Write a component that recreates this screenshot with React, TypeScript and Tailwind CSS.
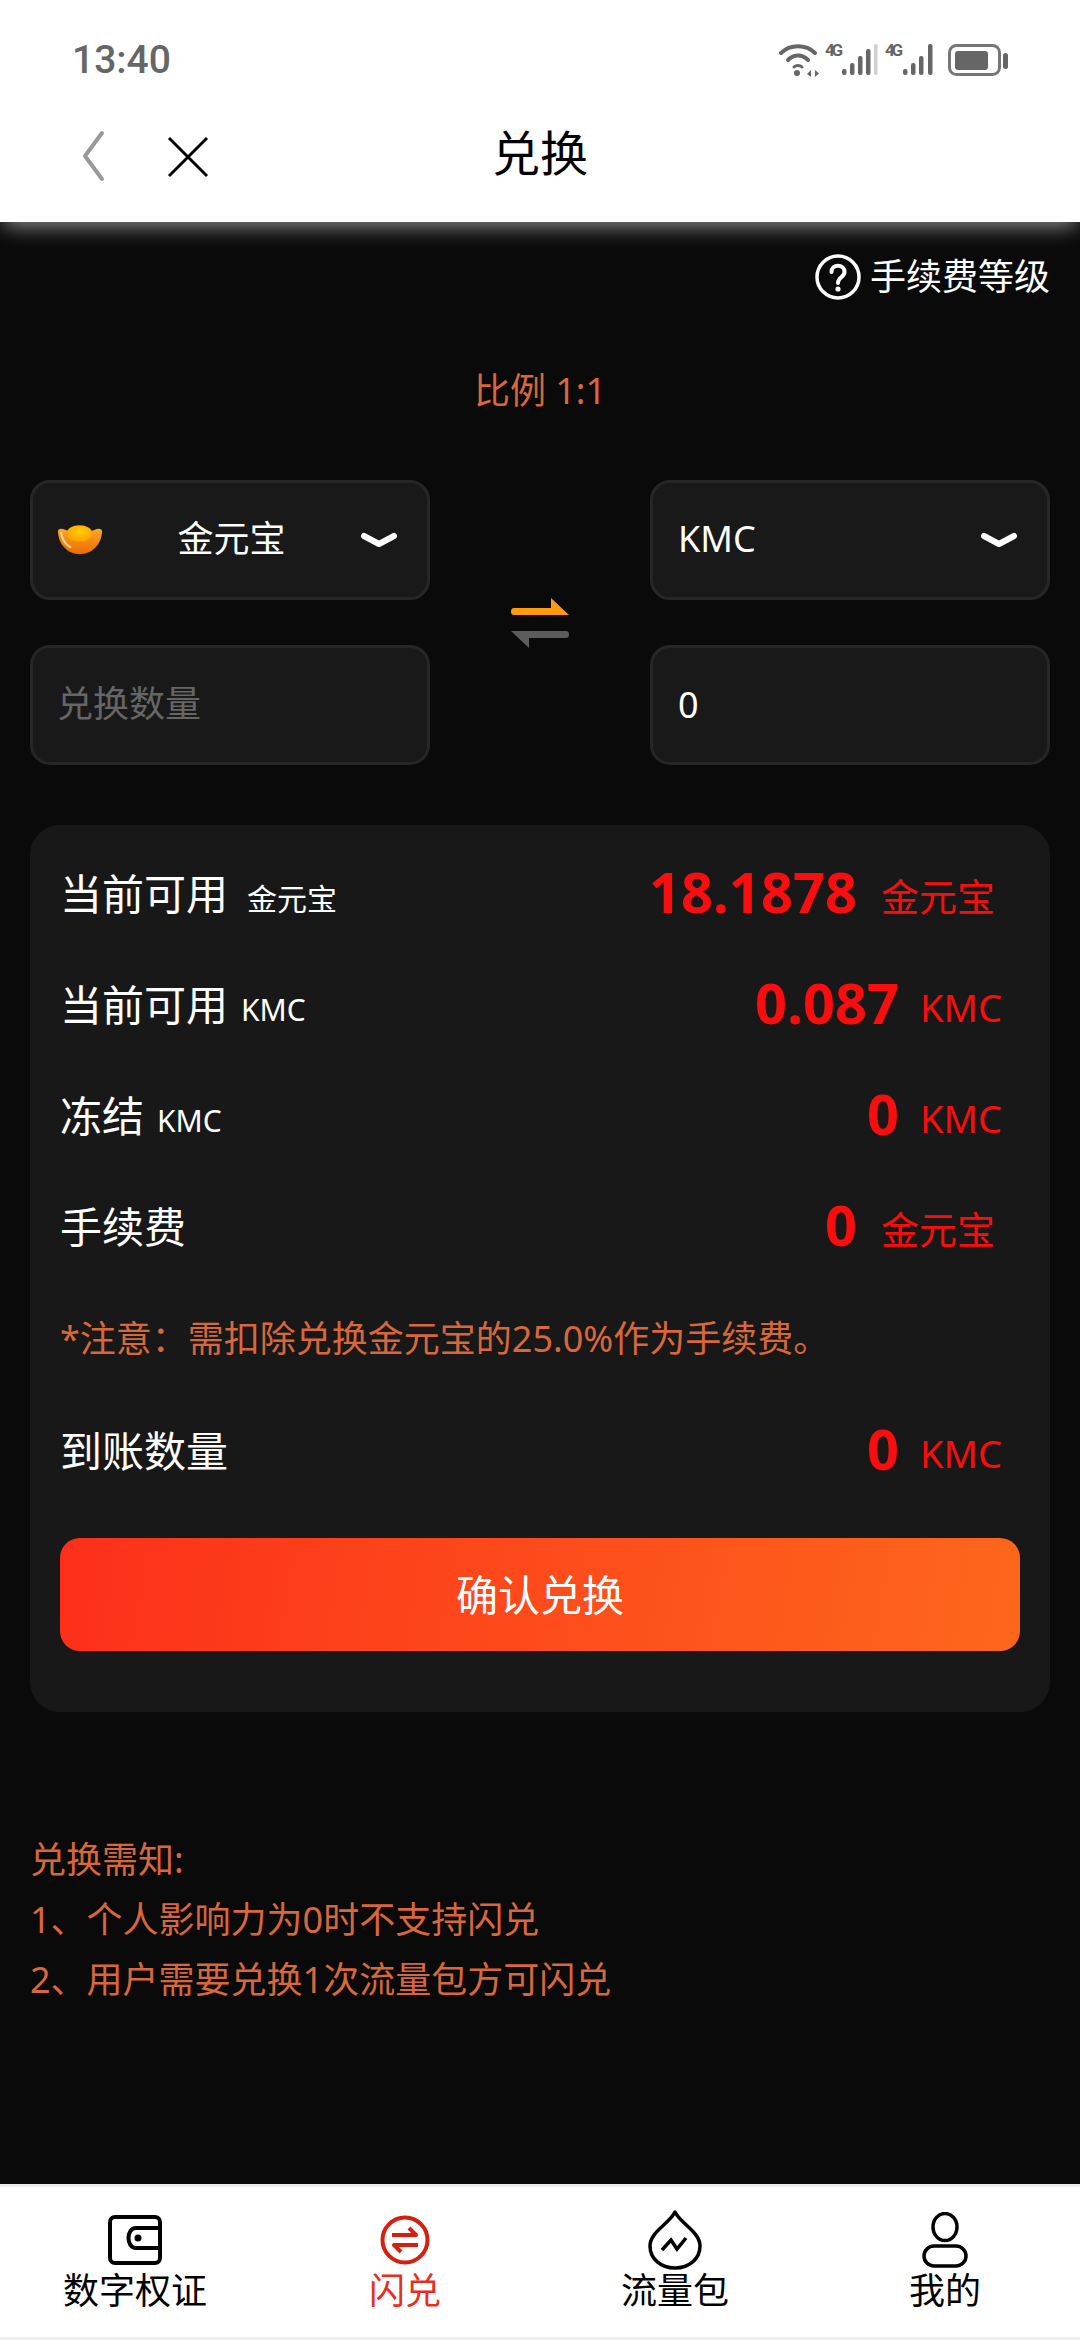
import React from "react";

function StatusIcons() {
  return (
    <svg width="230" height="40" viewBox="0 -4 230 40" fill="none" className="mb-[4px]">
      <g stroke="#666" strokeWidth="4" strokeLinecap="round">
        <path d="M3 11 C12 2 28 2 37 11" />
        <path d="M10 18 C16 12 24 12 30 18" />
        <path d="M16 25 C18 23 22 23 24 25" strokeWidth="3" />
      </g>
      <circle cx="19" cy="31" r="3" fill="#666" />
      <path d="M29 32 L33 28 V35 Z M35 28 V35 M37 28 L41 31.5 L37 35 Z" fill="#666" />
      <text x="47" y="14" fontSize="17" fontWeight="700" fontFamily="Roboto" fill="#666" textLength="18">4G</text>
      <g fill="#666">
        <rect x="64" y="27" width="4.5" height="6" rx="2" />
        <rect x="72" y="21" width="4.5" height="12" rx="2" />
        <rect x="80" y="14" width="4.5" height="19" rx="2" />
        <rect x="88" y="7" width="4.5" height="26" rx="2" />
      </g>
      <rect x="96" y="2" width="3.5" height="31" rx="1.5" fill="#d0d0d0" />
      <text x="107" y="14" fontSize="17" fontWeight="700" fontFamily="Roboto" fill="#666" textLength="18">4G</text>
      <g fill="#666">
        <rect x="125" y="27" width="4.5" height="6" rx="2" />
        <rect x="133" y="21" width="4.5" height="12" rx="2" />
        <rect x="141" y="14" width="4.5" height="19" rx="2" />
        <rect x="150" y="2" width="4.5" height="31" rx="2" />
      </g>
      <rect x="171.5" y="3.5" width="50" height="29" rx="7" stroke="#777" strokeWidth="3" />
      <rect x="177" y="9" width="33" height="19" rx="3" fill="#666" />
      <rect x="225" y="11" width="5" height="16" rx="2.5" fill="#666" />
    </svg>
  );
}

function Ingot() {
  return (
    <svg width="46" height="32" viewBox="0 0 45 30">
      <defs>
        <linearGradient id="ing" x1="0" y1="0" x2="0" y2="1">
          <stop offset="0" stopColor="#ffa726" />
          <stop offset="1" stopColor="#e96a00" />
        </linearGradient>
        <radialGradient id="top" cx="0.5" cy="0.4" r="0.6">
          <stop offset="0" stopColor="#ffd000" />
          <stop offset="1" stopColor="#ff9f00" />
        </radialGradient>
      </defs>
      <path d="M1 8 C0 4 4 3 8 5 C14 8 31 8 37 5 C41 3 45 4 44 8 C43 20 34 29 22 29 C11 29 2 20 1 8 Z" fill="url(#ing)" />
      <ellipse cx="22" cy="8.5" rx="12.5" ry="8" fill="url(#top)" />
      <path d="M4 8 C5 14 8 19 13 22" stroke="#ffd9a0" strokeWidth="2" fill="none" strokeLinecap="round" />
    </svg>
  );
}

function Chevron() {
  return (
    <svg width="38" height="18" viewBox="0 0 38 18" fill="none" className="mr-[5px]">
      <path d="M4 5 L19 13 L34 5" stroke="#fff" strokeWidth="6" strokeLinecap="round" strokeLinejoin="round" />
    </svg>
  );
}

function Box({ children, className = "text-white" }: { children: React.ReactNode; className?: string }) {
  return (
    <div className={"h-[120px] rounded-[20px] border-[3px] border-[#262626] bg-[#191919] flex items-center px-[24px] text-[36px] " + className}>
      {children}
    </div>
  );
}

function Row({
  label,
  sub,
  subClass = "",
  value,
  unit,
  cjk = false,
}: {
  label: string;
  sub?: string;
  subClass?: string;
  value: string;
  unit: string;
  cjk?: boolean;
}) {
  return (
    <div className="h-[111px] flex items-center justify-between">
      <div className="flex items-baseline text-white text-[42px]">
        <span>{label}</span>
        {sub ? <span className={"text-[30px] " + subClass}>{sub}</span> : null}
      </div>
      <div className={"flex items-baseline text-[#f80e0e] pb-[6px] " + (cjk ? "mr-[25px]" : "mr-[18px]")}>
        <span className="text-[56px] font-bold">{value}</span>
        <span className={(cjk ? "ml-[24px]" : "ml-[21px]") + " text-[38px] font-normal leading-[38px] relative -top-[2px]"}>{unit}</span>
      </div>
    </div>
  );
}

function Tab({ icon, label, active = false }: { icon: React.ReactNode; label: string; active?: boolean }) {
  return (
    <div className="flex flex-col items-center">
      <div className="h-[60px] flex items-center justify-center">{icon}</div>
      <div className={"text-[36px] leading-[42px] " + (active ? "text-[#e6301f]" : "text-black")}>{label}</div>
    </div>
  );
}

export default function App() {
  return (
    <div className="w-[1080px] h-[2340px] flex flex-col bg-[#0a0a0a] font-['Noto_Sans','Noto_Sans_CJK_SC',sans-serif] overflow-hidden">
      <header className="relative z-10 h-[222px] bg-white shadow-[0_8px_20px_-4px_rgba(255,255,255,0.55)]">
        <div className="h-[96px] pt-[24px] pl-[72px] pr-[72px] flex items-center justify-between">
          <span className="font-['Roboto'] font-medium text-[39px] text-[#666]">13:40</span>
          <StatusIcons />
        </div>
        <div className="relative h-[114px] flex items-center justify-center">
          <div className="absolute left-[80px] top-[34px] flex items-start">
            <svg width="26" height="52" viewBox="0 0 26 52" fill="none">
              <path d="M22 3 L5 26 L22 49" stroke="#999" strokeWidth="4" strokeLinecap="round" strokeLinejoin="round" />
            </svg>
            <svg width="42" height="42" viewBox="0 0 42 42" fill="none" className="ml-[61px] mt-[6px]">
              <path d="M2 2 L40 40 M40 2 L2 40" stroke="#000" strokeWidth="3" />
            </svg>
          </div>
          <span className="text-[48px] text-black">兑换</span>
        </div>
      </header>

      <main className="flex-1 flex flex-col">
        <div className="h-[50px] mt-[30px] pr-[30px] flex items-center justify-end text-white text-[36px]">
          <svg width="46" height="46" viewBox="0 0 46 46" fill="none" className="mr-[9px]">
            <circle cx="23" cy="23" r="21" stroke="#fff" strokeWidth="3.5" />
            <path d="M16.5 18 C16.5 9.5 29.5 9.5 29.5 18 C29.5 23 23 23 23 29" stroke="#fff" strokeWidth="4" strokeLinecap="round" />
            <circle cx="23" cy="35" r="2.6" fill="#fff" />
          </svg>
          手续费等级
        </div>

        <div className="h-[50px] mt-[64px] flex items-center justify-center text-[36px] text-[#d9673c]">比例 1:1</div>

        <div className="mt-[64px] px-[30px] grid grid-cols-[400px_220px_400px] grid-rows-[120px_120px] gap-y-[45px]">
          <Box className="text-white justify-between">
            <Ingot />
            <span className="pb-[2px]">金元宝</span>
            <Chevron />
          </Box>
          <div className="row-span-2 flex items-center justify-center">
            <svg width="58" height="50" viewBox="0 0 58 50" fill="none">
              <path d="M3 10 H40 V0 L58 17 H3 Q0 17 0 13.5 Q0 10 3 10 Z" fill="#ff9a0a" />
              <path d="M0 33 H55 Q58 33 58 36.5 Q58 40 55 40 H18 V50 Z" fill="#5c5c5c" />
            </svg>
          </div>
          <Box className="text-white justify-between">
            <span className="pl-[1px] pb-[2px]">KMC</span>
            <Chevron />
          </Box>
          <Box className="text-[#666666]">
            <span className="pb-[3px]">兑换数量</span>
          </Box>
          <Box className="text-white">
            <span className="pl-[1px]">0</span>
          </Box>
        </div>

        <section className="mt-[60px] mx-[30px] rounded-[30px] bg-[#181818] pt-[13px] px-[30px] pb-[61px]">
          <Row label="当前可用" sub="金元宝" subClass="ml-[19px]" value="18.1878" unit="金元宝" cjk />
          <Row label="当前可用" sub="KMC" subClass="ml-[13px]" value="0.087" unit="KMC" />
          <Row label="冻结" sub="KMC" subClass="ml-[13px]" value="0" unit="KMC" />
          <Row label="手续费" value="0" unit="金元宝" cjk />
          <div className="h-[60px] mt-[27px] flex items-center text-[36px] text-[#d9673c]">*注意：需扣除兑换金元宝的25.0%作为手续费。</div>
          <div className="mt-[26px]">
            <Row label="到账数量" value="0" unit="KMC" />
          </div>
          <button className="mt-[32px] w-full h-[113px] rounded-[20px] bg-[linear-gradient(100deg,#fd2f1a,#fe671c)] text-white text-[42px] flex items-center justify-center">
            确认兑换
          </button>
        </section>

        <div className="mt-[118px] px-[30px] text-[36px] leading-[60px] text-[#d9673c]">
          <div>兑换需知:</div>
          <div>1、个人影响力为0时不支持闪兑</div>
          <div>2、用户需要兑换1次流量包方可闪兑</div>
        </div>
      </main>

      <footer className="h-[156px] bg-white border-t-[3px] border-b-[3px] border-[#eeeeee] grid grid-cols-4 pt-[23px]">
        <Tab
          label="数字权证"
          icon={
            <svg width="54" height="50" viewBox="0 0 54 50" fill="none">
              <rect x="2" y="2" width="50" height="46" rx="5" stroke="#000" strokeWidth="4" />
              <path d="M52 13 H28 C18 13 18 33 28 33 H52" stroke="#000" strokeWidth="4" />
              <circle cx="30" cy="23" r="3.5" fill="#000" />
            </svg>
          }
        />
        <Tab
          label="闪兑"
          active
          icon={
            <svg width="50" height="50" viewBox="0 0 50 50" fill="none">
              <circle cx="25" cy="25" r="22.5" stroke="#d4200f" strokeWidth="4" />
              <path d="M12 20 H36 L29 13" stroke="#d4200f" strokeWidth="4" strokeLinejoin="round" />
              <path d="M38 30 H14 L21 37" stroke="#d4200f" strokeWidth="4" strokeLinejoin="round" />
            </svg>
          }
        />
        <Tab
          label="流量包"
          icon={
            <svg width="54" height="60" viewBox="0 0 54 60" fill="none">
              <path d="M27 2 C21 14 2 22 2 36 C2 49 13 58 27 58 C41 58 52 49 52 36 C52 22 33 14 27 2 Z" stroke="#000" strokeWidth="3.5" strokeLinejoin="round" />
              <path d="M14 40 L23 30 L29 39 L38 28" stroke="#000" strokeWidth="3.5" />
            </svg>
          }
        />
        <Tab
          label="我的"
          icon={
            <svg width="46" height="56" viewBox="0 0 46 56" fill="none">
              <ellipse cx="23" cy="15" rx="12" ry="13.5" stroke="#000" strokeWidth="3.5" />
              <rect x="2" y="34" width="42" height="20" rx="10" stroke="#000" strokeWidth="3.5" />
            </svg>
          }
        />
      </footer>
    </div>
  );
}
